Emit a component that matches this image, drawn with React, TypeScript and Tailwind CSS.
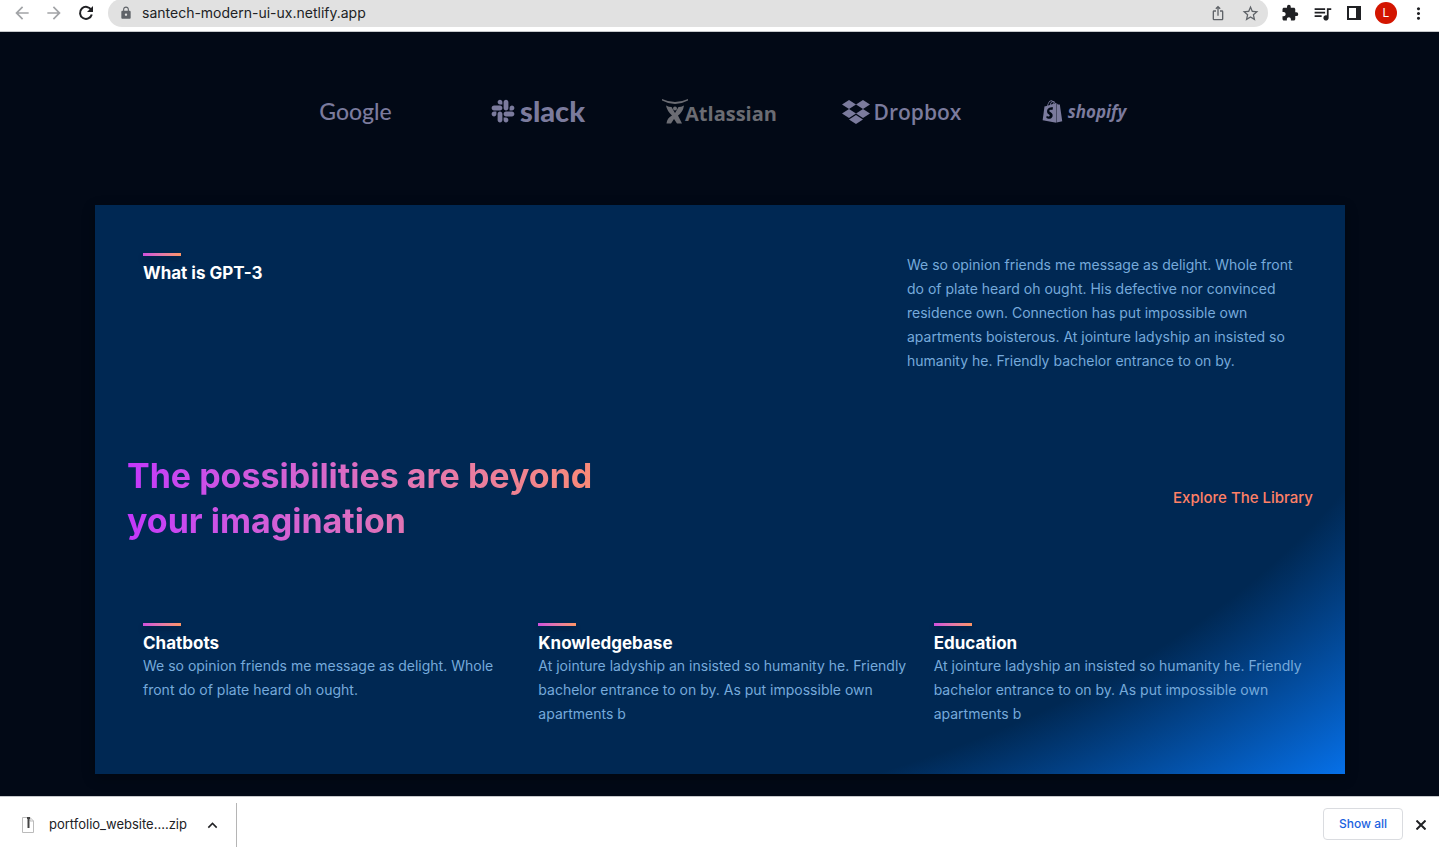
import type { ReactNode } from "react";
import { FaDropbox, FaShopify, FaSlack } from "react-icons/fa";
import {
  MdArrowBack,
  MdArrowForward,
  MdExtension,
  MdIosShare,
  MdKeyboardArrowUp,
  MdLock,
  MdMoreVert,
  MdOutlineQueueMusic,
  MdStarOutline,
} from "react-icons/md";

type FeatureItem = { title: string; text: string };

const features: FeatureItem[] = [
  {
    title: "Chatbots",
    text: "We so opinion friends me message as delight. Whole front do of plate heard oh ought.",
  },
  {
    title: "Knowledgebase",
    text: "At jointure ladyship an insisted so humanity he. Friendly bachelor entrance to on by. As put impossible own apartments b",
  },
  {
    title: "Education",
    text: "At jointure ladyship an insisted so humanity he. Friendly bachelor entrance to on by. As put impossible own apartments b",
  },
];

function IconButton({ label, children }: { label: string; children: ReactNode }) {
  return (
    <button aria-label={label} className="flex h-[26px] w-8 items-center justify-center">
      {children}
    </button>
  );
}

function BrowserBar() {
  return (
    <header className="flex h-8 shrink-0 items-start border-b border-[#c6c8cb] bg-white pr-[5px] pl-1.5 text-[#202124]">
      <div className="flex text-[#a2a4a7]">
        <IconButton label="Back">
          <MdArrowBack size={20} />
        </IconButton>
        <IconButton label="Forward">
          <MdArrowForward size={20} />
        </IconButton>
      </div>
      <IconButton label="Reload">
        <svg width="16" height="16" viewBox="0 0 16 16" fill="none">
          <path d="M13.300 5A6 6 0 1 0 13.800 9.500" stroke="currentColor" strokeWidth="2" />
          <path d="M15 1v6H9z" fill="currentColor" />
        </svg>
      </IconButton>
      <div className="-mt-px mr-1.5 ml-1.5 flex h-7 flex-1 items-center rounded-full bg-[#e1e1e1] pr-0.5 pl-[11px]">
        <MdLock size={14} className="text-[#5f6368]" />
        <input
          aria-label="Address"
          readOnly
          value="santech-modern-ui-ux.netlify.app"
          className="ml-[9px] min-w-0 flex-1 bg-transparent text-sm outline-none"
        />
        <div className="flex items-center text-[#5f6368]">
          <IconButton label="Share">
            <MdIosShare size={16} />
          </IconButton>
          <IconButton label="Bookmark">
            <MdStarOutline size={19} />
          </IconButton>
        </div>
      </div>
      <div className="flex items-center">
        <IconButton label="Extensions">
          <MdExtension size={18} />
        </IconButton>
        <IconButton label="Media">
          <MdOutlineQueueMusic size={21} />
        </IconButton>
        <IconButton label="Side panel">
          <svg width="14" height="14" viewBox="0 0 14 14">
            <path fill="currentColor" fillRule="evenodd" d="M0 0h14v14H0zM2 2v10h7V2z" />
          </svg>
        </IconButton>
        <IconButton label="Profile">
          <span className="flex size-[22px] items-center justify-center rounded-full bg-[#d31500] text-xs text-white">
            L
          </span>
        </IconButton>
        <IconButton label="Menu">
          <MdMoreVert size={19} />
        </IconButton>
      </div>
    </header>
  );
}

function AtlassianMark() {
  return (
    <svg width="27" height="25" viewBox="0 0 27 25" fill="currentColor" aria-hidden="true">
      <path d="M0 0Q13 6 26 0L26 1.500Q13 8.500 0 1.500Z" />
      <path d="M4 6.500Q7 8 9.500 8L13 14L16.500 8Q19 8 22 6.500Q21 13 16 16.500L20 24.500H15L12 20L9 24.500H4.500Q5 19 10 16.500Q5 12 4 6.500Z" />
      <circle cx="13" cy="9.500" r="2" />
    </svg>
  );
}

function Brands() {
  return (
    <section
      aria-label="Brands"
      className="mx-auto grid h-[173px] w-full max-w-[910px] grid-cols-5 items-center justify-items-center pb-3.5 leading-8 text-[#7b7b9d]"
    >
      <span className="pb-0.5 font-[Lato] text-[23px] font-medium">Google</span>
      <span className="flex items-center gap-1 pb-0.5 font-[Lato] text-[29px] font-black">
        <FaSlack size={26} />
        slack
      </span>
      <span className="flex items-center font-['Open_Sans'] text-xl font-bold text-[#6b6c73]">
        <AtlassianMark />
        <span className="-ml-1 pt-1">Atlassian</span>
      </span>
      <span className="flex items-center gap-1 font-['Open_Sans'] text-[21px] font-semibold">
        <FaDropbox size={28} />
        Dropbox
      </span>
      <span className="flex items-center gap-1 font-['Open_Sans'] text-[17px] font-bold italic">
        <FaShopify size={23} />
        shopify
      </span>
    </section>
  );
}

function Accent() {
  return (
    <div className="h-[3px] w-[38px] bg-linear-to-r from-[#d04fdc] to-[#ff9462] shadow-[0_4px_5px_rgba(0,20,50,0.4)]" />
  );
}

function Feature({ title, text }: FeatureItem) {
  return (
    <article className="pl-4">
      <Accent />
      <h3 className="mt-1 pt-0.5 text-[17px] leading-[22px] font-bold text-white">{title}</h3>
      <p className="text-sm leading-6">{text}</p>
    </article>
  );
}

function WhatGpt3() {
  return (
    <section className="mr-[94px] ml-[95px] bg-[radial-gradient(ellipse_at_25%_0%,#002853_79%,#0670e8_100%)] px-8 pt-12 pb-12 text-[#76aadb] shadow-[0_4px_12px_rgba(0,0,0,0.3)]">
      <div className="flex justify-between px-4">
        <div>
          <Accent />
          <h2 className="mt-1 pt-0.5 text-[17px] leading-[22px] font-bold text-white">
            What is GPT-3
          </h2>
        </div>
        <p className="w-[390px] text-sm leading-6">
          We so opinion friends me message as delight. Whole front do of plate heard oh ought. His
          defective nor convinced residence own. Connection has put impossible own apartments
          boisterous. At jointure ladyship an insisted so humanity he. Friendly bachelor entrance to
          on by.
        </p>
      </div>
      <div className="mt-20 flex items-center justify-between">
        <h1 className="max-w-[510px] bg-linear-to-r from-[#c436fb] to-[#ff8e64] bg-clip-text text-[34px] leading-[45px] font-bold text-transparent">
          The possibilities are beyond your imagination
        </h1>
        <a href="#library" className="text-[15px] leading-6 font-medium text-[#ff8066]">
          Explore The Library
        </a>
      </div>
      <div className="mt-20 grid grid-cols-3">
        {features.map((item) => (
          <Feature key={item.title} {...item} />
        ))}
      </div>
    </section>
  );
}

function Downloads() {
  return (
    <footer className="flex h-[57px] shrink-0 items-center border-t border-[#c6c8cb] bg-white pr-2 text-[#202124]">
      <div className="flex h-11 items-center border-r border-[#b5b5b5] pr-3.5 pl-[22px]">
        <svg width="12" height="16" viewBox="0 0 12 16" aria-hidden="true">
          <path d="M.5.5h7.500l3.500 3.500v11.500H.5zM8 .5V4h3.500" fill="#fff" stroke="#bbb" />
          <path d="M5 1h3M6.500 1v10" stroke="#444" strokeWidth="2" />
        </svg>
        <span className="ml-[15px] text-[13px]">portfolio_website....zip</span>
        <button aria-label="Download options" className="ml-4">
          <MdKeyboardArrowUp size={19} />
        </button>
      </div>
      <button className="mr-2 mb-0.5 ml-auto h-8 rounded border border-[#dadce0] px-[15px] text-xs font-medium text-[#1a62e0]">
        Show all
      </button>
      <button aria-label="Close downloads" className="flex size-5 items-center justify-center">
        <svg width="10" height="10" viewBox="0 0 10 10" stroke="currentColor" strokeWidth="2">
          <path d="M.5.5l9 9M9.500.5l-9 9" />
        </svg>
      </button>
    </footer>
  );
}

export default function App() {
  return (
    <div className="flex min-h-screen flex-col bg-[#020916] font-[Inter,sans-serif]">
      <BrowserBar />
      <main className="flex-1">
        <Brands />
        <WhatGpt3 />
      </main>
      <Downloads />
    </div>
  );
}
